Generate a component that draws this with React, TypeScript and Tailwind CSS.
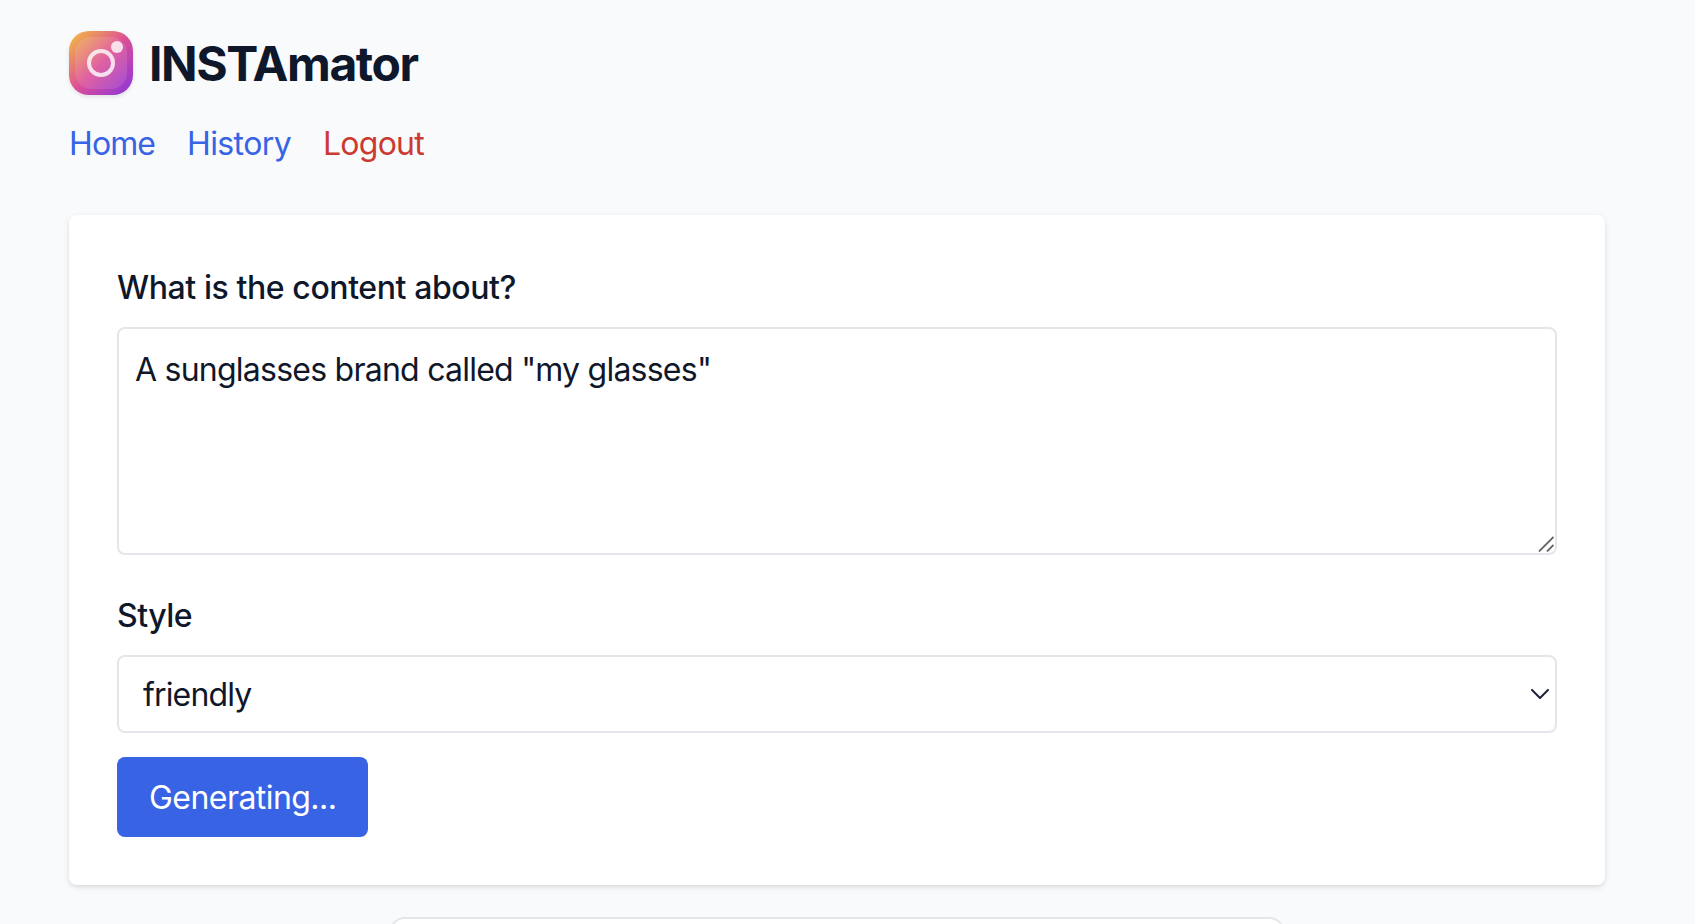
function Logo() {
  return (
    <div className="relative size-16 shrink-0 rounded-[20px] bg-[linear-gradient(to_bottom_right,#f3c23c,#dd4f96_50%,#8834de)] shadow-[0_2px_4px_rgba(0,0,0,0.1)]">
      <div className="absolute inset-1.5 rounded-[16px] bg-white/10" />
      <div className="absolute top-[18px] left-[18px] size-7 rounded-full border-4 border-white/80" />
      <div className="absolute top-2.5 right-2.5 size-3 rounded-full bg-white/80" />
    </div>
  );
}

function Header() {
  return (
    <header>
      <div className="flex items-center gap-4">
        <Logo />
        <h1 className="pt-0.5 text-5xl leading-[62px] font-bold tracking-[-1.42px]">INSTAmator</h1>
      </div>
      <nav className="mt-[25px] flex text-[32px] leading-[48px]">
        <a className="w-[118px] tracking-[-0.9px] text-[#3863e5]">Home</a>
        <a className="w-[136px] tracking-[-0.6px] text-[#3863e5]">History</a>
        <a className="tracking-[-0.75px] text-[#cb3a31]">Logout</a>
      </nav>
    </header>
  );
}

export default function App() {
  return (
    <div className="h-[924px] overflow-hidden bg-[#f9fafc] pt-[31px] pr-[90px] pl-[69px] font-['Inter',sans-serif] text-[#0f172a]">
      <Header />
      <main>
        <form className="mt-[47px] flex flex-col rounded-lg bg-white p-12 text-[32px] leading-[48px] shadow-[0_2px_6px_rgba(0,0,0,0.1),0_2px_4px_-2px_rgba(0,0,0,0.1)]">
          <label htmlFor="content" className="leading-[50px] font-medium tracking-[-0.41px]">
            What is the content about?
          </label>
          <div className="relative mt-3.5 h-[228px]">
            <textarea
              id="content"
              rows={4}
              defaultValue={'A sunglasses brand called "my glasses"'}
              className="block size-full resize-none overflow-hidden rounded-lg border-2 border-[#e5e6eb] bg-white px-4 pt-[17px] pb-[15px] tracking-[-0.76px] outline-none"
            />
            <svg className="absolute right-[3px] bottom-[3px]" width="16" height="16" viewBox="0 0 16 16" fill="none" stroke="#666" strokeWidth="1.8">
              <path d="M1 15.5 15.5 1M9 15.5 15.5 9" />
            </svg>
          </div>
          <label htmlFor="style" className="mt-9 leading-[50px] font-medium tracking-[-0.5px]">
            Style
          </label>
          <button
            id="style"
            type="button"
            className="mt-3.5 flex h-[78px] items-center justify-between rounded-lg border-2 border-[#e5e6eb] bg-white pr-1.5 pl-6 text-left"
          >
            <span className="pt-0.5 tracking-[-0.85px]">friendly</span>
            <svg width="18" height="10" viewBox="0 0 18 10" fill="none" stroke="#1e2438" strokeWidth="2" strokeLinecap="round" strokeLinejoin="round">
              <path d="m1 1 8 8 8-8" />
            </svg>
          </button>
          <button
            type="button"
            className="mt-6 h-20 w-[251px] rounded-lg bg-[#3863e5] pt-0.5 pl-8 text-left tracking-[-0.55px] text-white"
          >
            Generating...
          </button>
        </form>
        <section className="mt-8 ml-80 h-40 w-[896px] rounded-[16px] border-2 border-[#e5e6eb] bg-white" />
      </main>
    </div>
  );
}
